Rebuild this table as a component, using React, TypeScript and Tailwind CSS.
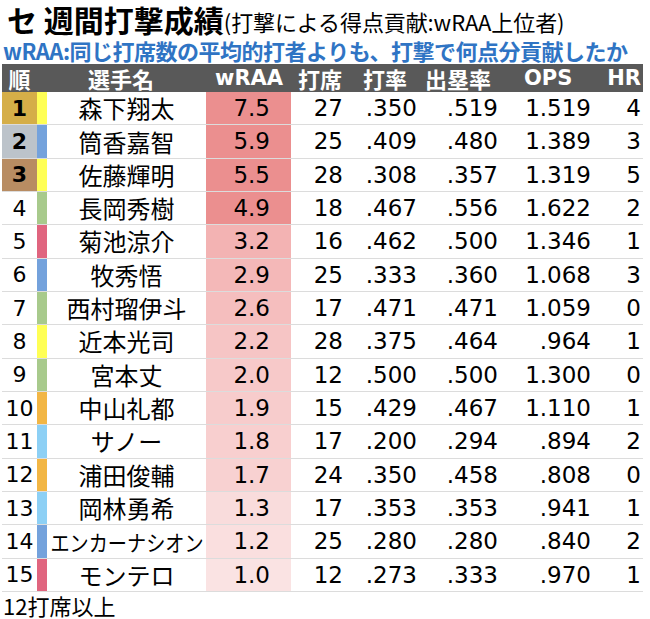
import React from "react";

const JP = '"Noto Sans CJK JP", sans-serif';
const NUM = '"DejaVu Sans", "Noto Sans CJK JP", sans-serif';

type Row = {
  rank: number;
  team: string;
  name: string;
  wraa: string;
  pink: string;
  pa: string;
  avg: string;
  obp: string;
  ops: string;
  hr: string;
};

const Y = "#ffff55";
const B = "#74a2dc";
const G = "#a8ca8c";
const R = "#e0657f";
const O = "#f2b645";
const L = "#8dd0f5";

const rows: Row[] = [
  { rank: 1, team: Y, name: "森下翔太", wraa: "7.5", pink: "#eb8f8f", pa: "27", avg: ".350", obp: ".519", ops: "1.519", hr: "4" },
  { rank: 2, team: B, name: "筒香嘉智", wraa: "5.9", pink: "#eb8f8f", pa: "25", avg: ".409", obp: ".480", ops: "1.389", hr: "3" },
  { rank: 3, team: Y, name: "佐藤輝明", wraa: "5.5", pink: "#eb8f8f", pa: "28", avg: ".308", obp: ".357", ops: "1.319", hr: "5" },
  { rank: 4, team: G, name: "長岡秀樹", wraa: "4.9", pink: "#eb8f8f", pa: "18", avg: ".467", obp: ".556", ops: "1.622", hr: "2" },
  { rank: 5, team: R, name: "菊池涼介", wraa: "3.2", pink: "#f3b3b3", pa: "16", avg: ".462", obp: ".500", ops: "1.346", hr: "1" },
  { rank: 6, team: B, name: "牧秀悟", wraa: "2.9", pink: "#f4b8b8", pa: "25", avg: ".333", obp: ".360", ops: "1.068", hr: "3" },
  { rank: 7, team: G, name: "西村瑠伊斗", wraa: "2.6", pink: "#f5bebe", pa: "17", avg: ".471", obp: ".471", ops: "1.059", hr: "0" },
  { rank: 8, team: Y, name: "近本光司", wraa: "2.2", pink: "#f6c5c5", pa: "28", avg: ".375", obp: ".464", ops: ".964", hr: "1" },
  { rank: 9, team: G, name: "宮本丈", wraa: "2.0", pink: "#f7c9c9", pa: "12", avg: ".500", obp: ".500", ops: "1.300", hr: "0" },
  { rank: 10, team: O, name: "中山礼都", wraa: "1.9", pink: "#f7cccc", pa: "15", avg: ".429", obp: ".467", ops: "1.110", hr: "1" },
  { rank: 11, team: L, name: "サノー", wraa: "1.8", pink: "#f8cfcf", pa: "17", avg: ".200", obp: ".294", ops: ".894", hr: "2" },
  { rank: 12, team: O, name: "浦田俊輔", wraa: "1.7", pink: "#f8d1d1", pa: "24", avg: ".350", obp: ".458", ops: ".808", hr: "0" },
  { rank: 13, team: L, name: "岡林勇希", wraa: "1.3", pink: "#f9dcdc", pa: "17", avg: ".353", obp: ".353", ops: ".941", hr: "1" },
  { rank: 14, team: B, name: "エンカーナシオン", wraa: "1.2", pink: "#fadfdf", pa: "25", avg: ".280", obp: ".280", ops: ".840", hr: "2" },
  { rank: 15, team: R, name: "モンテロ", wraa: "1.0", pink: "#fae3e3", pa: "12", avg: ".273", obp: ".333", ops: ".970", hr: "1" },
];

const rankBg: Record<number, string> = {
  1: "#d5ae48",
  2: "#bcc3ca",
  3: "#b88c62",
};

export default function App() {
  return (
    <div className="w-[650px] h-[619px] bg-white overflow-hidden text-black" style={{ fontFamily: JP }}>
      {/* Title */}
      <div className="h-[36px] flex items-end pl-[7px] whitespace-nowrap">
        <span className="text-[30px] font-bold leading-[34px]">セ 週間打撃成績</span>
        <span className="text-[22px] leading-[30px] tracking-[-0.1px]">(打撃による得点貢献:wRAA上位者)</span>
      </div>
      <div className="h-[27px] flex items-center pl-[3px] whitespace-nowrap text-[22px] font-bold text-[#2f74c4] tracking-[-0.5px] leading-[26px]">
        wRAA:同じ打席数の平均的打者よりも、打撃で何点分貢献したか
      </div>

      {/* Table */}
      <div className="ml-[2px] w-[641px] mt-px">
        <div className="h-[28px] flex items-center bg-[#595959] text-white font-bold text-[22px] leading-none whitespace-nowrap">
          <div className="w-[35px] text-center">順</div>
          <div className="w-[10px]" />
          <div className="w-[159px] pl-[41px]">選手名</div>
          <div className="w-[85px] pl-[9px] text-[21px]" style={{ fontFamily: NUM }}>wRAA</div>
          <div className="w-[59px] pl-[7px]">打席</div>
          <div className="w-[75px] pl-[13px]">打率</div>
          <div className="w-[80px]">出塁率</div>
          <div className="w-[92px] pl-[19px] text-[21px]" style={{ fontFamily: NUM }}>OPS</div>
          <div className="flex-1 text-right pr-[2px] text-[21px]" style={{ fontFamily: NUM }}>HR</div>
        </div>

        {rows.map((r) => {
          const top = r.rank <= 3;
          const long = r.name.length > 6;
          return (
            <div key={r.rank} className="h-[33.33px] flex items-stretch border-b border-[#dcdcdc]">
              <div
                className={`w-[35px] flex items-center justify-center text-[22px] ${top ? "font-bold" : ""}`}
                style={{ backgroundColor: rankBg[r.rank] ?? "#ffffff", fontFamily: NUM }}
              >
                {r.rank}
              </div>
              <div className="w-[10px]" style={{ backgroundColor: r.team }} />
              <div className="w-[159px] flex items-center justify-center whitespace-nowrap text-[24px]">
                {long ? (
                  <span className="inline-block text-[22px] scale-x-[0.87] origin-center">{r.name}</span>
                ) : (
                  r.name
                )}
              </div>
              <div
                className="w-[85px] flex items-center justify-end pr-[21px] text-[23px]"
                style={{ backgroundColor: r.pink, fontFamily: NUM }}
              >
                {r.wraa}
              </div>
              <div className="w-[59px] flex items-center justify-end pr-[7px] text-[23px]" style={{ fontFamily: NUM }}>
                {r.pa}
              </div>
              <div className="w-[75px] flex items-center justify-end pr-[8px] text-[23px]" style={{ fontFamily: NUM }}>
                {r.avg}
              </div>
              <div className="w-[80px] flex items-center justify-end pr-[7px] text-[23px]" style={{ fontFamily: NUM }}>
                {r.obp}
              </div>
              <div className="w-[92px] flex items-center justify-end pr-[6px] text-[23px]" style={{ fontFamily: NUM }}>
                {r.ops}
              </div>
              <div className="flex-1 flex items-center justify-end pr-[2px] text-[23px]" style={{ fontFamily: NUM }}>
                {r.hr}
              </div>
            </div>
          );
        })}
      </div>
      <div className="pl-[3px] text-[22px] leading-[24px] mt-[1px]">12打席以上</div>
    </div>
  );
}
